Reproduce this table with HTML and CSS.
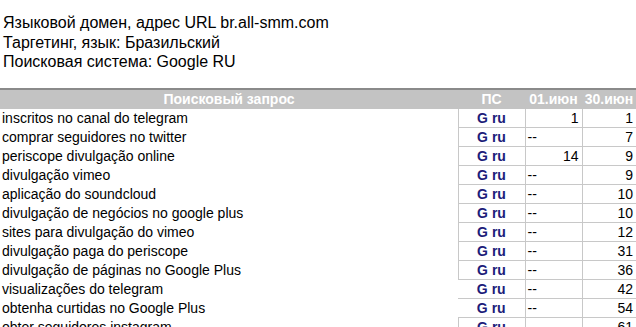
FILE: index.html
```html
<!DOCTYPE html>
<html>
<head>
<meta charset="utf-8">
<link rel="stylesheet" href="styles.css">
</head>
<body>
<div class="info">
  <div>Языковой домен, адрес URL br.all-smm.com</div>
  <div>Таргетинг, язык: Бразильский</div>
  <div>Поисковая система: Google RU</div>
</div>
<table class="report">
  <colgroup>
    <col class="c-query"><col class="c-ps"><col class="c-d1"><col class="c-d2">
  </colgroup>
  <thead>
    <tr><th>Поисковый запрос</th><th>ПС</th><th>01.июн</th><th>30.июн</th></tr>
  </thead>
  <tbody>
    <tr><td class="q">inscritos no canal do telegram</td><td class="ps">G ru</td><td class="num">1</td><td class="num">1</td></tr>
    <tr><td class="q">comprar seguidores no twitter</td><td class="ps">G ru</td><td class="dash">--</td><td class="num">7</td></tr>
    <tr><td class="q">periscope divulgação online</td><td class="ps">G ru</td><td class="num">14</td><td class="num">9</td></tr>
    <tr><td class="q">divulgação vimeo</td><td class="ps">G ru</td><td class="dash">--</td><td class="num">9</td></tr>
    <tr><td class="q">aplicação do soundcloud</td><td class="ps">G ru</td><td class="dash">--</td><td class="num">10</td></tr>
    <tr><td class="q">divulgação de negócios no google plus</td><td class="ps">G ru</td><td class="dash">--</td><td class="num">10</td></tr>
    <tr><td class="q">sites para divulgação do vimeo</td><td class="ps">G ru</td><td class="dash">--</td><td class="num">12</td></tr>
    <tr><td class="q">divulgação paga do periscope</td><td class="ps">G ru</td><td class="dash">--</td><td class="num">31</td></tr>
    <tr><td class="q">divulgação de páginas no Google Plus</td><td class="ps">G ru</td><td class="dash">--</td><td class="num">36</td></tr>
    <tr><td class="q">visualizações do telegram</td><td class="ps nb">G ru</td><td class="dash">--</td><td class="num">42</td></tr>
    <tr><td class="q">obtenha curtidas no Google Plus</td><td class="ps nb">G ru</td><td class="dash">--</td><td class="num">54</td></tr>
    <tr><td class="q">obter seguidores instagram</td><td class="ps">G ru</td><td class="dash">--</td><td class="num">61</td></tr>
    <tr><td class="q">promoção do twitter</td><td class="ps">G ru</td><td class="dash">--</td><td class="num">68</td></tr>
  </tbody>
</table>
</body>
</html>
```
FILE: styles.css
```css
html {
  overflow: hidden;
  background: #ffffff;
}
body {
  margin: 0;
  font-family: "Liberation Sans", Arial, sans-serif;
  color: #000000;
}
.info {
  padding: 13px 3px 0;
  font-size: 16px;
  line-height: 19.5px;
}
.report {
  margin-top: 16px;
  width: 636px;
  border-collapse: collapse;
  table-layout: fixed;
  font-size: 14px;
}
.c-query { width: 458px; }
.c-ps { width: 67px; }
.c-d1 { width: 57px; }
.c-d2 { width: 54px; }
.report thead tr {
  border-top: 2px solid #8a8a8a;
}
.report th {
  background: #c3c3c3;
  color: #ffffff;
  font-weight: bold;
  height: 19px;
  padding: 0 2px;
  line-height: 18px;
  text-align: center;
  white-space: nowrap;
  overflow: hidden;
}
.report td {
  height: 18px;
  line-height: 18px;
  padding: 0 2px;
  white-space: nowrap;
  overflow: hidden;
}
.report td.q {
  padding-left: 2px;
}
.report td.ps,
.report td.num,
.report td.dash {
  border-left: 1px solid #c8c8c8;
  border-bottom: 1px solid #c8c8c8;
}
.report td.ps.nb {
  border-left: none;
}
.report td.ps {
  text-align: center;
  font-weight: bold;
  color: #1c1c7a;
}
.report td.num {
  text-align: right;
  padding-right: 3px;
}
.report td.dash {
  text-align: left;
}
```
